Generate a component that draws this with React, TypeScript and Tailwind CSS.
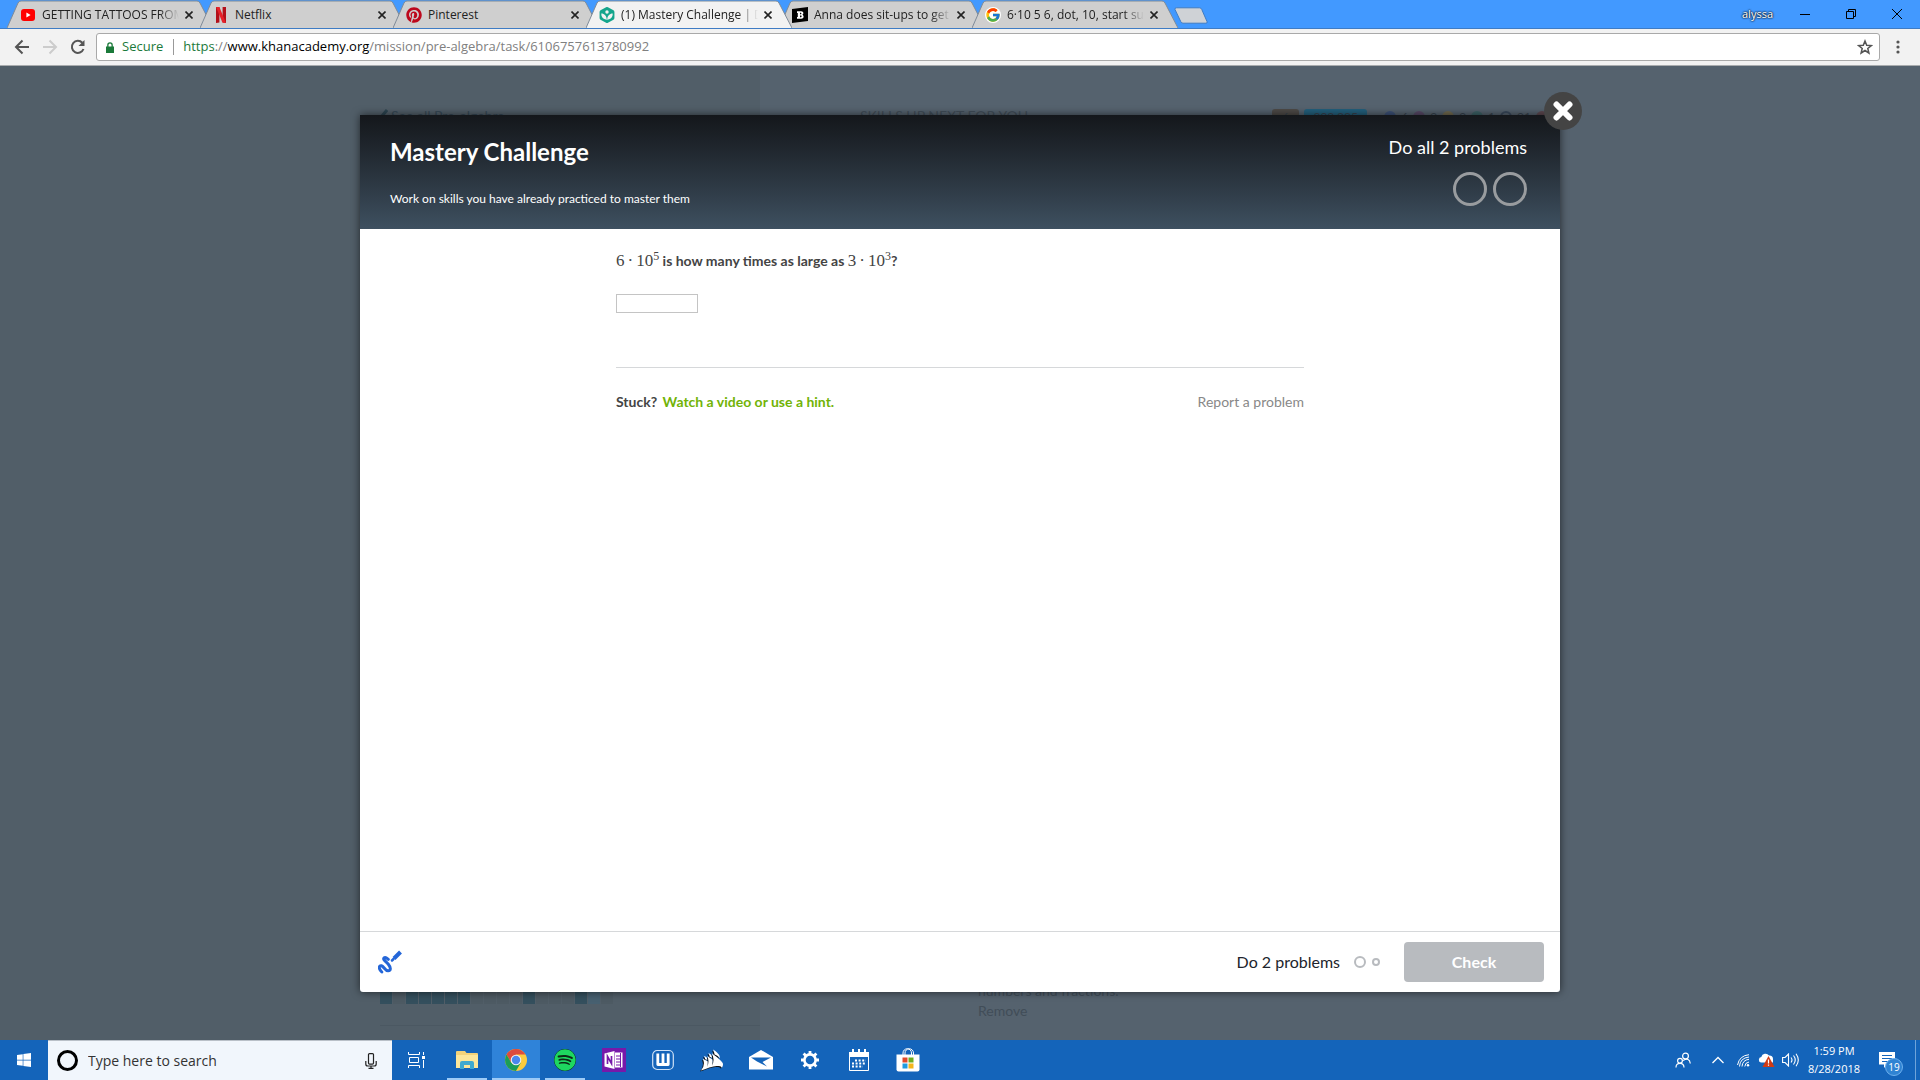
import * as React from 'react';
import { FaPinterest, FaSpotify, FaWindows } from 'react-icons/fa';
import { FcGoogle } from 'react-icons/fc';
import { SiCorsair, SiKhanacademy } from 'react-icons/si';

type TabInfo = {
  title: string;
  icon: React.ReactNode;
  active?: boolean;
};

const YoutubeIcon = () => (
  <svg viewBox="0 0 16 16" className="size-4 shrink-0">
    <rect x="1" y="2" width="14" height="12" rx="3" fill="#f00" />
    <path d="M6.4 5.4 10.6 8l-4.2 2.6z" fill="#fff" />
  </svg>
);

const NetflixIcon = () => (
  <svg viewBox="0 0 16 16" className="size-4 shrink-0">
    <path d="M3 0h3.4v15.6L3 16zM9.6 0H13v16l-3.4-.4z" fill="#b3101a" />
    <path d="M3 0h3.4L13 16l-3.6-.4z" fill="#e62129" />
  </svg>
);

const BrainlyIcon = () => (
  <svg viewBox="0 0 16 16" className="size-4 shrink-0">
    <path d="M0 2 16 0v14L0 16z" fill="#000" />
    <path
      d="M5 4.2h4.2c2.6 0 2.8 3 1 3.6 2.2.6 1.8 4-1 4H5V10h.8V6H5zm3 1.6v1.4h.8c.8 0 .8-1.4 0-1.4zm0 2.8v1.6h1c.9 0 .9-1.6 0-1.6z"
      fill="#fff"
      fillRule="evenodd"
    />
  </svg>
);

const tabs: TabInfo[] = [
  { title: 'GETTING TATTOOS FROM', icon: <YoutubeIcon /> },
  { title: 'Netflix', icon: <NetflixIcon /> },
  { title: 'Pinterest', icon: <FaPinterest className="size-4 shrink-0 text-[#bd081c]" /> },
  {
    title: '(1) Mastery Challenge | D',
    icon: <SiKhanacademy className="size-4 shrink-0 text-[#14a58c]" />,
    active: true,
  },
  { title: 'Anna does sit-ups to get', icon: <BrainlyIcon /> },
  {
    title: '6·10 5 6, dot, 10, start sup',
    icon: (
      <span className="flex size-4 shrink-0 items-center justify-center rounded-full bg-white">
        <FcGoogle className="size-4" />
      </span>
    ),
  },
];

const Tab = ({ title, icon, active }: TabInfo) => (
  <div className={`relative -mr-[13px] h-7 w-[206px] shrink-0 ${active ? 'z-10' : ''}`}>
    <svg
      viewBox="0 0 206 28"
      preserveAspectRatio="none"
      className="absolute inset-0 size-full"
    >
      <path
        d="M0 28 11 3Q12 1 14 1H190Q192 1 193 3L206 28"
        fill={active ? '#f2f2f2' : '#cfcfcf'}
        stroke="#7f8b98"
        strokeWidth="1"
      />
    </svg>
    <div className="relative flex h-full items-center pt-px pr-5 pl-[13px]">
      {icon}
      <button
        className={`ml-1.5 min-w-0 flex-1 text-left text-[12px] whitespace-nowrap ${
          title.length > 12
            ? 'mask-r-from-[calc(100%-20px)] mask-r-to-100%'
            : ''
        }`}
      >
        {title}
      </button>
      <button aria-label="Close tab" className="ml-1.5">
        <svg viewBox="0 0 8 8" className="size-2" stroke="#222" strokeWidth="1.6">
          <path d="m.5.5 7 7m0-7-7 7" />
        </svg>
      </button>
    </div>
  </div>
);

const TabStrip = () => (
  <div className="flex h-[29px] items-start border-b border-[#3f7cc4] bg-[#4299ff] pl-[7px]">
    {tabs.map((tab) => (
      <Tab key={tab.title} {...tab} />
    ))}
    <button aria-label="New tab" className="mt-[7px] ml-[9px]">
      <svg viewBox="0 0 34 17" className="h-[17px] w-[34px]">
        <path
          d="M2.5.8h23q1.500 0 2.200 1.500L33 14.500q.6 1.700-1 1.700H9q-1.500 0-2.200-1.500L1 2.500Q.6.8 2.500.8z"
          fill="#cfd2d6"
          stroke="#3f7cc4"
        />
      </svg>
    </button>
    <div className="ml-auto flex h-7 items-center pr-[17px] text-black">
      <button className="mr-[26px] text-[11px] text-white [text-shadow:0_0_2px_#000,0_0_2px_#000]">
        alyssa
      </button>
      <button aria-label="Minimize">
        <svg viewBox="0 0 12 12" className="mr-[34px] size-3" stroke="#000">
          <path d="M1 6.500h10" />
        </svg>
      </button>
      <button aria-label="Restore">
        <svg viewBox="0 0 12 12" className="mr-[34px] size-3" stroke="#000" fill="none">
          <path d="M1.500 3.500h7v7h-7zM3.500 3.500v-2h7v7h-2" />
        </svg>
      </button>
      <button aria-label="Close">
        <svg viewBox="0 0 12 12" className="size-3" stroke="#000" fill="none">
          <path d="m1 1 10 10m0-10L1 11" />
        </svg>
      </button>
    </div>
  </div>
);

const Toolbar = () => (
  <div className="flex h-[37px] items-center border-b border-[#a9acae] bg-[#f2f2f2] pr-5 pl-3.5">
    <button aria-label="Back">
      <svg viewBox="0 0 16 16" className="size-4" stroke="#555" strokeWidth="2" fill="none">
        <path d="M15 8H2m6.500-6.500L2 8l6.500 6.500" />
      </svg>
    </button>
    <button aria-label="Forward" className="ml-3">
      <svg viewBox="0 0 16 16" className="size-4" stroke="#ccc" strokeWidth="2" fill="none">
        <path d="M1 8h13M7.500 1.500 14 8l-6.500 6.500" />
      </svg>
    </button>
    <button aria-label="Reload" className="ml-3">
      <svg viewBox="0 0 16 16" className="size-4" stroke="#555" strokeWidth="2" fill="none">
        <path d="M13.500 10A6 6 0 1 1 12.300 3.800" />
        <path d="M14.500 1v6h-6z" fill="#555" stroke="none" />
      </svg>
    </button>
    <div className="ml-2.5 flex h-7 flex-1 items-center rounded-[3px] border border-[#a9a9a9] bg-white pr-1.5 pl-[9px]">
      <svg viewBox="0 0 8 11" className="h-[11px] w-2" fill="#1b7a3a">
        <path d="M0 4.500h8V11H0zM1.200 4.500V3a2.800 2.800 0 0 1 5.600 0v1.500H5.500V3a1.500 1.500 0 0 0-3 0v1.500z" />
      </svg>
      <span className="ml-2 text-[13px] text-[#1b7a3a]">Secure</span>
      <div className="mr-[9px] ml-2.5 h-4 w-px bg-[#999]" />
      <a
        href="https://www.khanacademy.org/mission/pre-algebra/task/6106757613780992"
        className="text-[13px] text-[#808080]"
      >
        <span className="text-[#1b7a3a]">https</span>://
        <span className="text-black">www.khanacademy.org</span>
        /mission/pre-algebra/task/6106757613780992
      </a>
      <button aria-label="Bookmark" className="ml-auto">
        <svg viewBox="0 0 16 16" className="size-4" fill="none" stroke="#555" strokeWidth="1.5">
          <path d="m8 2 1.700 4.300 4.600.3-3.500 2.900 1.100 4.500L8 11.500 4.100 14l1.100-4.500L1.700 6.600l4.600-.3z" />
        </svg>
      </button>
    </div>
    <button aria-label="Menu" className="ml-4">
      <svg viewBox="0 0 4 14" className="h-3.5 w-1" fill="#555">
        <circle cx="2" cy="2" r="1.600" />
        <circle cx="2" cy="7" r="1.600" />
        <circle cx="2" cy="12" r="1.600" />
      </svg>
    </button>
  </div>
);

const stats = [
  { count: '6', color: 'bg-[#3c5076]' },
  { count: '9', color: 'bg-[#574866]' },
  { count: '9', color: 'bg-[#6f684e]' },
  { count: '1', color: 'bg-[#3c6064]' },
  { count: '91', color: 'border-2 border-[#38475a]' },
  { count: '', color: 'bg-[#5d4850]' },
];

const skillCells = [
  'on', 'off', 'on', 'on', 'on', 'on', 'on', 'off', 'off',
  'off', 'off', 'on', 'off', 'off', 'off', 'on', 'half', 'off',
];

const cellColors: Record<string, string> = {
  on: 'bg-[#344f5d]',
  half: 'bg-[#476070]',
  off: 'bg-[#4d5a63]',
};

// Mission page behind the task dialog, dimmed
const MissionPage = () => (
  <div className="col-start-1 row-start-1 flex bg-[#55626e] text-[15px] text-[#414d58]">
    <div className="flex w-[760px] shrink-0 flex-col justify-between bg-[#515e68] pt-[38px] pl-[380px]">
      <a href="#missions" className="flex items-center gap-[3px] text-[14px] leading-6 text-[#364855]">
        <svg viewBox="0 0 8 14" className="h-3.5 w-2" fill="none" stroke="#2c4450" strokeWidth="3">
          <path d="M7 1 2 7l5 6" />
        </svg>
        See all Pre-algebra
      </a>
      <div>
        <div className="flex gap-px">
          {skillCells.map((cell, index) => (
            <div key={`cell-${index}`} className={`h-4 w-3 ${cellColors[cell]}`} />
          ))}
        </div>
        <div className="mt-[21px] h-px bg-[#4b5862]" />
        <div className="h-3.5" />
      </div>
    </div>
    <div className="flex flex-1 flex-col justify-between pt-[38px] pb-[19px] pl-[100px]">
      <div className="flex items-start justify-between pr-[372px]">
        <span className="text-[14px] leading-6">SKILLS UP NEXT FOR YOU</span>
        <div className="flex items-center gap-[5px] pt-[5px] text-[12px] text-[#36414c]">
          <span className="h-4 w-[27px] rounded-[3px] bg-[#4d4a47] text-center leading-4">6</span>
          <span className="mr-3 h-4 w-[63px] rounded-[3px] bg-[#235f7c] text-center leading-4">
            303,335
          </span>
          {stats.map((stat, index) => (
            <span key={`stat-${index}`} className="flex items-center gap-[5px] leading-4">
              <span className={`size-3 rounded-full ${stat.color}`} />
              {stat.count}
            </span>
          ))}
        </div>
      </div>
      <div className="pl-[118px] text-[14px] leading-5">
        <p>numbers and fractions.</p>
        <a href="#remove">Remove</a>
      </div>
    </div>
  </div>
);

const DialogHeader = () => (
  <div className="flex h-[114px] justify-between bg-linear-to-b from-[#14171b] to-[#3e5060] px-[30px] text-white lg:pr-[33px]">
    <div className="pt-[21px]">
      <h1 className="text-[24px] leading-8 font-bold">Mastery Challenge</h1>
      <p className="mt-[21px] text-[12px] leading-5">
        Work on skills you have already practiced to master them
      </p>
    </div>
    <div className="flex flex-col items-end pt-5">
      <span className="text-[18px] leading-6">Do all 2 problems</span>
      <div className="mt-[13px] flex gap-1.5">
        <span className="size-[34px] rounded-full border-3 border-[#999c9f]" />
        <span className="size-[34px] rounded-full border-3 border-[#999c9f]" />
      </div>
    </div>
  </div>
);

const Power = ({ factor, exponent }: { factor: string; exponent: string }) => (
  <span className="font-['Liberation_Serif',serif] text-[17px] font-normal">
    {factor}
    <span className="mx-[3px]">·</span>
    10
    <sup className="-top-1.5 text-[12px]">{exponent}</sup>
  </span>
);

const Exercise = () => (
  <div className="mx-auto w-full max-w-[688px] flex-1 text-[14px] text-[#444]">
    <label htmlFor="answer" className="block pt-5 leading-6 font-bold">
      <Power factor="6" exponent="5" /> is how many times as large as{' '}
      <Power factor="3" exponent="3" />?
    </label>
    <input
      id="answer"
      type="text"
      className="mt-[21px] block h-[19px] w-[82px] border border-[#c4c4c4] px-1 outline-none"
    />
    <hr className="mt-[54px] border-[#d6d8da]" />
    <div className="mt-6 flex items-center justify-between leading-5">
      <p className="font-bold">
        Stuck?{' '}
        <a href="#hint" className="ml-0.5 text-[#71b307]">
          Watch a video or use a hint.
        </a>
      </p>
      <a href="#report" className="text-[#888]">
        Report a problem
      </a>
    </div>
  </div>
);

const DialogFooter = () => (
  <div className="flex h-[61px] items-center border-t border-[#d6d8da] pr-4 pl-[18px]">
    <button aria-label="Scratchpad">
      <svg viewBox="0 0 24 24" className="size-6" fill="none" stroke="#2466d8" strokeLinecap="round">
        <path
          d="M3.800 22C0 18.500 1 15 3.500 15.800c2.700.900 3.500 5 6.500 5 3.500-.200 2.500-3.800.500-6.300C8.500 12 4.500 9.500 6 8c1.500-1.300 3 .200 4.300 1.300"
          strokeWidth="3"
        />
        <path d="M16 8.500 22.500 2" strokeWidth="4" strokeLinecap="butt" />
        <path d="m14 10.500 1.500-1.500" strokeWidth="2.500" />
      </svg>
    </button>
    <span className="ml-auto text-[16px] text-[#21242c]">Do 2 problems</span>
    <span className="ml-3.5 size-3 rounded-full border-2 border-[#b8bbbf]" />
    <span className="ml-1.5 size-2 rounded-full border-2 border-[#b8bbbf]" />
    <button className="ml-6 h-10 w-[140px] rounded bg-[#b8bbbf] text-[16px] font-bold text-white">
      Check
    </button>
  </div>
);

const TaskDialog = () => (
  <div
    role="dialog"
    aria-label="Mastery Challenge"
    className="relative col-start-1 row-start-1 mx-auto mt-[49px] mb-12 flex w-full max-w-[1200px] flex-col rounded-b-[3px] bg-white shadow-[0_0_8px_rgba(0,0,0,0.6)]"
  >
    <DialogHeader />
    <Exercise />
    <DialogFooter />
    <button
      aria-label="Close dialog"
      className="absolute -top-[23px] -right-[22px] flex size-[38px] items-center justify-center rounded-full bg-[#444]"
    >
      <svg viewBox="0 0 20 20" className="size-5" stroke="#fff" strokeWidth="6" strokeLinecap="round">
        <path d="m3.500 3.500 13 13m0-13-13 13" />
      </svg>
    </button>
  </div>
);

const ExplorerIcon = () => (
  <svg viewBox="0 0 22 18" className="h-[18px] w-[22px]">
    <path d="M0 1q0-1 1-1h8l1.500 2H21q1 0 1 1v14H0z" fill="#f3d27a" />
    <path d="M0 4h22v13H0z" fill="#fce69b" />
    <path d="M4 18v-6q0-2 2-2h10q2 0 2 2v6h-4v-4H8v4z" fill="#40a9cf" />
  </svg>
);

const ChromeIcon = () => (
  <svg viewBox="0 0 22 22" className="size-[22px]">
    <circle cx="11" cy="11" r="11" fill="#fccb3f" />
    <path d="M1.500 5.500A11 11 0 0 1 20.500 5.500H11L6.200 13.700z" fill="#dd4b3e" />
    <path d="M1.500 5.500A11 11 0 0 0 11 22l4.800-8.300H6.200z" fill="#1b9d58" />
    <circle cx="11" cy="11" r="5.300" fill="#f1f1f1" />
    <circle cx="11" cy="11" r="4.200" fill="#4a87ee" />
  </svg>
);

const OneNoteIcon = () => (
  <svg viewBox="0 0 24 24" className="size-6">
    <path d="M0 0h24v24H0z" fill="#7719aa" />
    <path d="M13 4.500h7.500v15H13z" fill="#fff" />
    <path d="M14 8h4m-4 3h4m-4 3h4m-4 3h4M18.500 5v14" stroke="#7719aa" />
    <path d="M2.500 5.500 12.500 3v18l-10-2.500z" fill="#fff" />
    <path d="M5.500 16V8.500l4 7V8" stroke="#7719aa" strokeWidth="1.700" fill="none" />
  </svg>
);

const WattpadIcon = () => (
  <svg viewBox="0 0 22 22" className="size-[22px]" fill="none">
    <rect x=".7" y="1.500" width="20.600" height="19" rx="4.500" stroke="#cfe2f7" strokeWidth="1.200" />
    <path d="M5.800 4.500V15.500H16.200V4.500M11 4.500v11" stroke="#fff" strokeWidth="2.800" strokeLinejoin="round" />
  </svg>
);

const MailIcon = () => (
  <svg viewBox="0 0 24 20" className="h-5 w-6">
    <path d="M0 7 12 0l12 7v12.500H0z" fill="#fff" />
    <path d="M2 7.500h20L13.500 12l4.500 4.500-10-5z" fill="#1464ba" />
  </svg>
);

const GearIcon = () => (
  <svg viewBox="0 0 20 20" className="size-5" fill="none" stroke="#fff">
    <circle cx="10" cy="10" r="5.600" strokeWidth="2.600" />
    <path
      d="M10 4V1M10 19v-3M4 10H1M19 10h-3M5.800 5.800 3.600 3.600M16.400 16.400l-2.200-2.200M14.200 5.800l2.200-2.200M3.600 16.400l2.200-2.200"
      strokeWidth="2.800"
    />
  </svg>
);

const CalendarIcon = () => (
  <svg viewBox="0 0 20 24" className="h-6 w-5">
    <path d="M0 4h3V1h2v3h4V1h2v3h4V1h2v3h3v5H0z" fill="#fff" />
    <path d="M.5 8v14.500h19V8" fill="none" stroke="#fff" />
    <path
      d="M6 12.500h11M3 15.500h14M3 18.500h11"
      stroke="#fff"
      strokeWidth="2"
      strokeDasharray="2 1.600"
    />
  </svg>
);

const StoreIcon = () => (
  <svg viewBox="0 0 24 24" className="size-6">
    <path d="M7 7V5a4 4 0 0 1 8.500 0v2M9 7V5a4 4 0 0 1 8.500 0v2" fill="none" stroke="#fff" />
    <path d="M.5 6.500h23v15q0 2-2 2h-19q-2 0-2-2z" fill="#fff" />
    <path d="M6.500 9.500h5v5h-5z" fill="#e0492b" />
    <path d="M12.500 9.500h5v5h-5z" fill="#6fae1f" />
    <path d="M6.500 15.500h5v5h-5z" fill="#1f9be0" />
    <path d="M12.500 15.500h5v5h-5z" fill="#f3b51b" />
  </svg>
);

const apps = [
  { name: 'File Explorer', icon: <ExplorerIcon />, state: 'open' },
  { name: 'Chrome', icon: <ChromeIcon />, state: 'current' },
  { name: 'Spotify', icon: <FaSpotify className="size-[22px] rounded-full bg-[#0d2a18] text-[#1ed760]" />, state: 'open' },
  { name: 'OneNote', icon: <OneNoteIcon /> },
  { name: 'Wattpad', icon: <WattpadIcon /> },
  { name: 'Corsair', icon: <SiCorsair className="size-[22px] text-white drop-shadow-[-1px_1px_0_#111]" /> },
  { name: 'Mail', icon: <MailIcon /> },
  { name: 'Settings', icon: <GearIcon /> },
  { name: 'Calendar', icon: <CalendarIcon /> },
  { name: 'Store', icon: <StoreIcon /> },
];

const Tray = () => (
  <div className="ml-auto flex items-center text-white">
    <svg viewBox="0 0 16 16" className="size-4" fill="none" stroke="#fff" strokeWidth="1.200">
      <circle cx="10.500" cy="4" r="2.900" />
      <circle cx="5" cy="8.800" r="2.400" />
      <path d="M1 15.500q0-4.200 4-4.200t4 4.200M8 8.500q6.500-3.500 7.300 3" />
    </svg>
    <svg viewBox="0 0 12 8" className="ml-[21px] h-2 w-3" fill="none" stroke="#fff" strokeWidth="1.300">
      <path d="m.5 7 5.500-5.500L11.500 7" />
    </svg>
    <svg viewBox="0 0 13 13" className="ml-[13px] size-[13px]" fill="none" stroke="#fff">
      <circle cx="11" cy="11.300" r="1.200" fill="#fff" stroke="none" />
      <path d="M7.800 12.500Q8 8.500 12 8M5 12.500Q5.500 6 12 5.300M2.500 12.500Q3 4 12 3M.5 11Q2.500 1.500 12 .7" />
    </svg>
    <svg viewBox="0 0 17 14" className="ml-2 h-3.5 w-[17px]">
      <path d="M3 9.500a2.800 2.800 0 0 1 .3-5.500A4.300 4.300 0 0 1 11 2.500 3.300 3.300 0 0 1 15 6v3.500z" fill="#fff" />
      <path d="M10.500 3 16.500 14h-12z" fill="#d13a14" />
      <path d="M10.500 6.500v4M10.500 11.500v1.300" stroke="#fff" strokeWidth="1.200" />
    </svg>
    <svg viewBox="0 0 17 14" className="ml-[7px] h-3.5 w-[17px]" fill="none" stroke="#fff" strokeWidth="1.100">
      <path d="M.6 4.500h2.500L6.500 1v12L3.100 9.500H.6zM9 4.500q2 2.500 0 5M11.500 2.500q3.500 4.500 0 9M14 .7q4.600 6.300 0 12.600" />
    </svg>
    <button className="ml-2 flex w-[54px] flex-col items-center text-[11px] leading-[18px]">
      <span>1:59 PM</span>
      <span>8/28/2018</span>
    </button>
    <button aria-label="Notifications" className="relative ml-[18px]">
      <svg viewBox="0 0 16 16" className="size-4">
        <path d="M0 0h16v12.500H8L5 16v-3.500H0z" fill="#fff" />
        <path d="M3 3.500h10M3 6.500h10M3 9.500h6" stroke="#1464ba" />
      </svg>
      <span className="absolute top-1.5 left-1.5 flex size-[18px] items-center justify-center rounded-full border border-[#6db0ee] bg-[#2f83d3] text-[10px]">
        19
      </span>
    </button>
    <div className="ml-5 h-10 w-px bg-[#6fa3da]" />
    <div className="w-1" />
  </div>
);

const Taskbar = () => (
  <div className="flex h-10 shrink-0 bg-[#1464ba]">
    <button aria-label="Start" className="flex w-12 items-center justify-center">
      <FaWindows className="size-4 text-white" />
    </button>
    <label className="flex w-[344px] items-center border-t border-[#b9c0c8] bg-[#f1f6fc] pr-[15px] pl-[9px]">
      <span className="size-[21px] rounded-full border-3 border-black" />
      <input
        type="text"
        aria-label="Search"
        placeholder="Type here to search"
        className="ml-2.5 flex-1 bg-transparent text-[14px] outline-none placeholder:text-[#333]"
      />
      <svg viewBox="0 0 12 16" className="h-4 w-3" fill="none" stroke="#222" strokeWidth="1.200">
        <rect x="3.500" y=".6" width="5" height="10.500" rx="1" />
        <path d="M.8 8v3q0 2 2 2h6.400q2 0 2-2V8M6 13v2.400M3.500 15.400h5" />
      </svg>
    </label>
    <button aria-label="Task View" className="mr-[3px] flex w-12 items-center justify-center">
      <svg viewBox="0 0 17 16" className="h-4 w-[17px]" fill="none" stroke="#fff">
        <path d="M.5 0v2.500h11V0M.5 16v-2.500h11V16M1.500 5.500h9v5h-9zM15.500 0v3M15.500 8v8" />
        <path d="M14 4h3v3h-3z" fill="#fff" stroke="none" />
      </svg>
    </button>
    <div className="flex gap-px">
      {apps.map(({ name, icon, state }) => (
        <button
          key={name}
          aria-label={name}
          className={`flex w-12 flex-col items-center ${state === 'current' ? 'bg-[#2f83d9]' : ''}`}
        >
          <span className="flex flex-1 items-center pt-0.5">{icon}</span>
          <span
            className={`h-0.5 ${
              state === 'current'
                ? 'w-full bg-[#9dcbf7]'
                : state === 'open'
                  ? 'w-10 bg-[#9dcbf7]'
                  : ''
            }`}
          />
        </button>
      ))}
    </div>
    <Tray />
  </div>
);

const App = () => (
  <div className="flex min-h-screen flex-col overflow-hidden font-['Open_Sans','Noto_Sans',sans-serif] text-[#222]">
    <TabStrip />
    <Toolbar />
    <main className="grid flex-1 grid-cols-1 font-[Lato,sans-serif]">
      <MissionPage />
      <TaskDialog />
    </main>
    <Taskbar />
  </div>
);

export default App;
